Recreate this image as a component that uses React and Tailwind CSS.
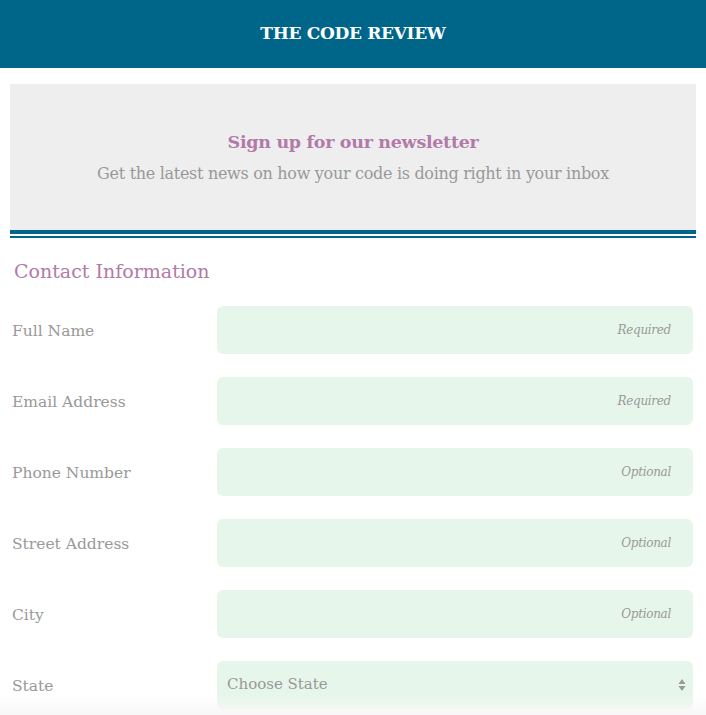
const fields = [
  { label: "Full Name", hint: "Required" },
  { label: "Email Address", hint: "Required" },
  { label: "Phone Number", hint: "Optional" },
  { label: "Street Address", hint: "Optional" },
  { label: "City", hint: "Optional" },
];

export default function App() {
  return (
    <div className="min-h-screen bg-white font-['DejaVu_Serif',serif] relative">
      <header className="h-[68px] bg-[#006689] flex items-center justify-center">
        <h1 className="text-white font-bold text-[17px] tracking-[-0.3px]">THE CODE REVIEW</h1>
      </header>

      <div className="px-[10px] pt-[16px]">
        <div className="bg-[#eeeeee] h-[146px] flex flex-col items-center justify-center">
          <h2 className="text-[#b27aa8] font-bold text-[17.5px] leading-[26px] tracking-[-0.3px]">
            Sign up for our newsletter
          </h2>
          <p className="text-[#999999] text-[16px] leading-[22px] mt-[8px] tracking-[-0.3px]">
            Get the latest news on how your code is doing right in your inbox
          </p>
        </div>
        <div className="h-[4px] bg-[#006689]" />
        <div className="h-[2px]" />
        <div className="h-[2px] bg-[#006689]" />
      </div>

      <form className="pl-[12px] pr-[13px]">
        <h3 className="text-[#b27aa8] text-[19px] leading-[26px] pl-[2px] mt-[20px]">
          Contact Information
        </h3>
        <div className="mt-[22px] flex flex-col gap-[23px]">
          {fields.map((f) => (
            <div key={f.label} className="flex items-center">
              <label className="w-[205px] text-[#999999] text-[15.5px] pt-[3px]">{f.label}</label>
              <div className="flex-1 h-[48px] rounded-[6px] bg-[#e7f6ea] flex items-center justify-end pr-[22px]">
                <span className="italic text-[#999999] text-[12px] tracking-[-0.3px]">{f.hint}</span>
              </div>
            </div>
          ))}
          <div className="flex items-center">
            <label className="w-[205px] text-[#999999] text-[15.5px] pt-[3px]">State</label>
            <div className="flex-1 h-[48px] rounded-[6px] bg-[#e7f6ea] flex items-center justify-between pl-[10px] pr-[6px]">
              <span className="text-[#999999] text-[15px] -mt-[2px]">Choose State</span>
              <svg width="8" height="14" viewBox="0 0 8 14" className="mr-[1px]">
                <path d="M4 1 L7.5 6 H0.5 Z" fill="#999999" />
                <path d="M4 13 L7.5 8 H0.5 Z" fill="#999999" />
              </svg>
            </div>
          </div>
        </div>
      </form>
      <div className="absolute left-0 right-0 top-[695px] h-[20px] bg-gradient-to-b from-transparent to-[#f7f7f7] pointer-events-none" />
    </div>
  );
}
